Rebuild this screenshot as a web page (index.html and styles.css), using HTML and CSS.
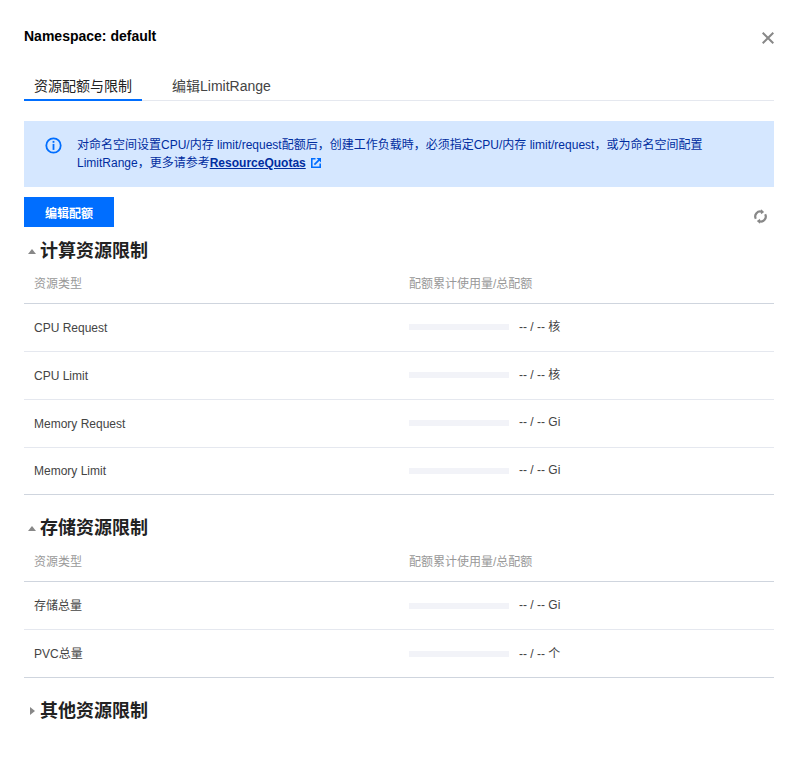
FILE: index.html
```html
<!DOCTYPE html>
<html lang="en">
<head>
    <meta charset="UTF-8">
    <title>Namespace: default</title>
    <link rel="stylesheet" href="styles.css">
</head>
<body>
    <div class="dialog">
        <div class="dialog-head">
            <h3 class="dialog-title">Namespace: default</h3>
            <svg class="close-icon" width="12" height="12" viewBox="0 0 12 12"><path d="M.7.7l10.600 10.600M11.300.7L.7 11.300" stroke="#888" stroke-width="2" fill="none"/></svg>
        </div>

        <div class="tabs">
            <div class="tab active">资源配额与限制</div>
            <div class="tab">编辑LimitRange</div>
        </div>

        <div class="alert">
            <svg class="info-icon" width="17" height="17" viewBox="0 0 17 17">
                <circle cx="8.500" cy="8.500" r="7.200" stroke="#006eff" stroke-width="1.800" fill="none"/>
                <rect x="7.600" y="3.900" width="1.800" height="1.900" fill="#006eff"/>
                <rect x="7.600" y="6.900" width="1.800" height="6" fill="#006eff"/>
            </svg>
            <div class="alert-text">
                <div><span>对命名空间设置CPU/内存 limit/request配额后，创建工作负载時，必须指定CPU/内存 limit/request，或为命名空间配置</span></div>
                <div>
                    <span>LimitRange，更多请参考</span><a class="alert-link">ResourceQuotas</a>
                    <svg class="link-icon" width="10" height="10" viewBox="0 0 10 10">
                        <path d="M4.500 .8H.8v8.400h8.400V5.500" stroke="#006eff" stroke-width="1.600" fill="none"/>
                        <path d="M3.400 6.600L8.600 1.400" stroke="#006eff" stroke-width="1.800" fill="none"/>
                        <path d="M5.500 0H10V4.500z" fill="#006eff"/>
                    </svg>
                </div>
            </div>
        </div>

        <div class="toolbar">
            <button class="btn-primary">编辑配额</button>
            <svg class="refresh-icon" width="13" height="15" viewBox="0 0 14 16">
                <path d="M2 10.500A5.300 5.300 0 0 1 8.500 3" stroke="#888" stroke-width="2.400" fill="none"/>
                <path d="M7.500 .2L11 3.200 7.500 5.600z" fill="#888"/>
                <path d="M12 5.500A5.300 5.300 0 0 1 5.500 13" stroke="#888" stroke-width="2.400" fill="none"/>
                <path d="M6.500 15.800L3 12.800 6.500 10.400z" fill="#888"/>
            </svg>
        </div>

        <div class="section-head first">
            <span class="arrow-up"></span>
            <h4>计算资源限制</h4>
        </div>
        <div class="table">
            <div class="row head"><div class="col-name">资源类型</div><div class="col-usage">配额累计使用量/总配额</div></div>
            <div class="row"><div class="col-name">CPU Request</div><div class="col-usage"><span class="bar"></span><span class="usage-value">-- / -- 核</span></div></div>
            <div class="row"><div class="col-name">CPU Limit</div><div class="col-usage"><span class="bar"></span><span class="usage-value">-- / -- 核</span></div></div>
            <div class="row"><div class="col-name">Memory Request</div><div class="col-usage"><span class="bar"></span><span class="usage-value">-- / -- Gi</span></div></div>
            <div class="row last"><div class="col-name">Memory Limit</div><div class="col-usage"><span class="bar"></span><span class="usage-value">-- / -- Gi</span></div></div>
        </div>

        <div class="section-head">
            <span class="arrow-up"></span>
            <h4>存储资源限制</h4>
        </div>
        <div class="table storage">
            <div class="row head"><div class="col-name">资源类型</div><div class="col-usage">配额累计使用量/总配额</div></div>
            <div class="row"><div class="col-name">存储总量</div><div class="col-usage"><span class="bar"></span><span class="usage-value">-- / -- Gi</span></div></div>
            <div class="row end"><div class="col-name">PVC总量</div><div class="col-usage"><span class="bar"></span><span class="usage-value">-- / -- 个</span></div></div>
        </div>

        <div class="section-head">
            <span class="arrow-right"></span>
            <h4>其他资源限制</h4>
        </div>
    </div>
</body>
</html>
```

FILE: styles.css
```css
body {
    margin: 0;
    background: #fff;
    font-family: "Liberation Sans", Arial, "Noto Sans CJK SC", sans-serif;
    font-size: 12px;
    color: #444;
}

.dialog {
    width: 750px;
    padding: 24px 24px 0;
}

.dialog-head {
    display: flex;
    justify-content: space-between;
    height: 46px;
}

.dialog-title {
    margin: 0;
    font-size: 14px;
    line-height: 24px;
    font-weight: bold;
    color: #000;
}

.close-icon {
    margin-top: 8px;
}

.tabs {
    display: flex;
    height: 30px;
    border-bottom: 1px solid #e5e8ef;
}

.tab {
    padding: 0 10px;
    margin-right: 20px;
    height: 30px;
    line-height: 32px;
    font-size: 14px;
    color: #444;
}

.tab.active {
    color: #222;
    border-bottom: 2px solid #006eff;
    height: 29px;
}

.alert {
    display: flex;
    margin-top: 20px;
    height: 66px;
    box-sizing: border-box;
    padding: 15px 20px;
    background: #d5e7ff;
    color: #002da0;
}

.info-icon {
    flex: none;
    margin: 1px 15px 0 1px;
}

.alert-text {
    line-height: 18px;
}

.alert-link {
    font-weight: bold;
    color: #002da0;
    text-decoration: underline;
}

.link-icon {
    margin-left: 2px;
    vertical-align: -1px;
}

.toolbar {
    display: flex;
    justify-content: space-between;
    align-items: flex-start;
    margin-top: 10px;
}

.btn-primary {
    width: 90px;
    height: 30px;
    padding: 0;
    border: none;
    background: #006eff;
    color: #fff;
    font: inherit;
    font-weight: bold;
}

.refresh-icon {
    margin: 12px 7px 0 0;
}

.section-head {
    display: flex;
    align-items: center;
    height: 24px;
    margin-top: 21px;
    padding-left: 4px;
}

.section-head.first {
    margin-top: 12px;
}

.section-head h4 {
    margin: 0;
    font-size: 18px;
    line-height: 24px;
    font-weight: bold;
    color: #222;
}

.arrow-up {
    width: 0;
    height: 0;
    margin-right: 4px;
    border-left: 4px solid transparent;
    border-right: 4px solid transparent;
    border-bottom: 5px solid #888;
}

.arrow-right {
    width: 0;
    height: 0;
    margin: 0 5px 0 2px;
    border-top: 4px solid transparent;
    border-bottom: 4px solid transparent;
    border-left: 5px solid #888;
}

.table.storage {
    margin-top: 1px;
}

.row {
    display: flex;
    align-items: center;
    height: 48px;
    box-sizing: border-box;
    border-bottom: 1px solid #e5e8ef;
}

.row.head {
    height: 41px;
    padding-bottom: 1px;
    color: #999;
    border-bottom-color: #cfd5de;
}

.row.last {
    height: 47px;
    border-bottom-color: #cfd5de;
}

.row.end {
    border-bottom-color: #cfd5de;
}

.col-name {
    width: 375px;
    padding-left: 10px;
    box-sizing: border-box;
}

.col-usage {
    display: flex;
    align-items: center;
    padding-left: 10px;
}

.row:not(.head) .col-usage {
    padding-bottom: 2px;
}

.row.last .col-usage,
.storage .row:not(.head) .col-usage {
    padding-bottom: 0;
}

.storage .row:not(.head) .col-name {
    padding-bottom: 2px;
}

.usage-value {
    margin-bottom: 2px;
}

.bar {
    width: 100px;
    height: 6px;
    margin-right: 10px;
    background: #f2f3f8;
}
```
